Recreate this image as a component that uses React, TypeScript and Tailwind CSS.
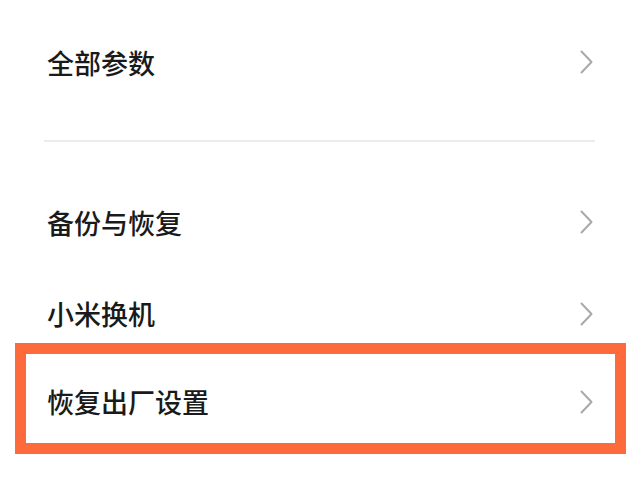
import React from 'react'

const Chevron = () => (
  <svg width="13" height="24" viewBox="0 0 13 24" fill="none" className="shrink-0">
    <polyline
      points="1.5,1.5 11.5,12 1.5,22.5"
      stroke="#a9a9a9"
      strokeWidth="2"
      strokeLinecap="round"
      strokeLinejoin="round"
    />
  </svg>
)

const Row = ({ label, className }: { label: string; className: string }) => (
  <div className={`flex items-center justify-between ${className}`}>
    <span className="text-[27px] font-medium leading-none text-[#1a1a1a]">{label}</span>
    <Chevron />
  </div>
)

export default function App() {
  return (
    <div
      className="h-[480px] w-[640px] overflow-hidden bg-white"
      style={{ fontFamily: '"Noto Sans CJK SC", "Noto Sans", sans-serif' }}
    >
      {/* 全部参数 */}
      <Row label="全部参数" className="h-[124px] pl-[47px] pr-[47px]" />

      <div className="ml-[44px] mr-[45px] mt-[16px] h-[2px] bg-[#ececec]" />

      <Row label="备份与恢复" className="mt-[34px] h-[92px] pl-[47px] pr-[47px]" />
      <Row label="小米换机" className="h-[75px] pl-[47px] pr-[47px] pt-[16px]" />

      {/* highlighted item */}
      <div className="ml-[15px] mr-[14px] border-[11px] border-[#fd6a3b]">
        <Row label="恢复出厂设置" className="h-[89px] pl-[21px] pr-[22px] pt-[6px]" />
      </div>
    </div>
  )
}
